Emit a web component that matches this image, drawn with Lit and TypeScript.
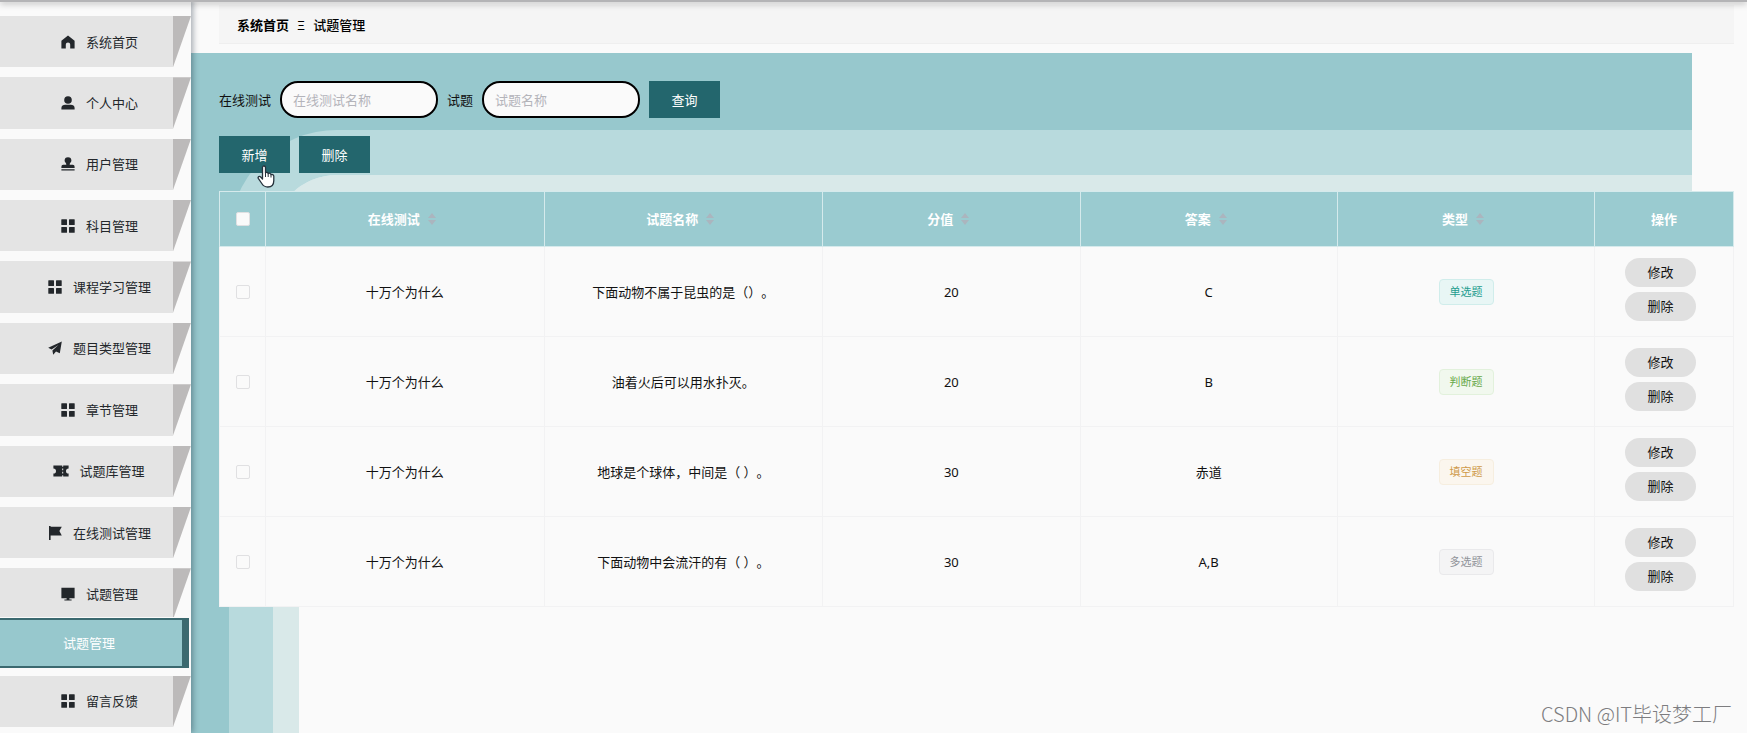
import { LitElement, html, css, svg } from "lit";
import { customElement, state } from "lit/decorators.js";
import { classMap } from "lit/directives/class-map.js";

const icons = {
  home: svg`<path d="M7 .4 13.600 5.800V13.600H9.200V9.600A2.200 2.200 0 0 0 4.800 9.600V13.600H.4V5.800Z"/>`,
  user: svg`<circle cx="7" cy="4" r="3.800"/><path d="M.4 13.600V12C.4 9.600 2.200 8.800 4.200 8.800H9.800C11.800 8.800 13.600 9.600 13.600 12V13.600Z"/>`,
  stamp: svg`<path d="M7 .2A3.400 3.400 0 0 1 10.400 3.600C10.400 5.400 8.700 5.800 8.700 7.400V7.800H11.400A2 2 0 0 1 13.600 9.800V11H.4V9.800A2 2 0 0 1 2.600 7.800H5.300V7.400C5.300 5.800 3.600 5.400 3.600 3.600A3.400 3.400 0 0 1 7 .2ZM.4 12.200H13.600V13.600H.4Z"/>`,
  grid: svg`<rect x=".3" y=".3" width="5.700" height="5.700" rx=".5"/><rect x="8" y=".3" width="5.700" height="5.700" rx=".5"/><rect x=".3" y="8" width="5.700" height="5.700" rx=".5"/><rect x="8" y="8" width="5.700" height="5.700" rx=".5"/>`,
  plane: svg`<path d="M13.800.4 11.800 12.200 8 10.600 5.200 13.800 4.400 9.600 10.400 4 3.600 8.600.2 6.800Z"/>`,
  ticket: svg`<path d="M-.6 1.400H8.200V2.800H9.200V1.400H14.600V4.400A2.600 2.600 0 0 0 14.600 9.600V12.600H9.200V11.200H8.200V12.600H-.6V9.600A2.600 2.600 0 0 0-.6 4.400ZM8.200 4.400V6.200H9.200V4.400ZM8.200 7.800V9.600H9.200V7.800Z" fill-rule="evenodd"/>`,
  flag: svg`<path d="M1 0H2.600V.8H13.800L11.400 5 13.800 9.400H2.600V14H1Z"/>`,
  monitor: svg`<path d="M.4 .8H13.600V11.200H.4ZM5.600 11.200H8.400V12.400H10.600V13.400H3.400V12.400H5.600Z"/>`,
};

type IconName = keyof typeof icons;

interface MenuEntry {
  label: string;
  icon?: IconName;
  sub?: boolean;
}

const menu: MenuEntry[] = [
  { label: "系统首页", icon: "home" },
  { label: "个人中心", icon: "user" },
  { label: "用户管理", icon: "stamp" },
  { label: "科目管理", icon: "grid" },
  { label: "课程学习管理", icon: "grid" },
  { label: "题目类型管理", icon: "plane" },
  { label: "章节管理", icon: "grid" },
  { label: "试题库管理", icon: "ticket" },
  { label: "在线测试管理", icon: "flag" },
  { label: "试题管理", icon: "monitor" },
  { label: "试题管理", sub: true },
  { label: "留言反馈", icon: "grid" },
];

@customElement("side-menu")
export class SideMenu extends LitElement {
  static styles = css`
    :host {
      display: block;
      background: #fafafa;
      box-shadow: 2px 0 6px rgba(0, 21, 41, 0.35);
    }
    .menu {
      box-sizing: border-box;
      height: 100%;
      margin: 0;
      padding: 16px 0 6px;
      list-style: none;
      display: flex;
      flex-direction: column;
    }
    .entry {
      flex: 1 1 44px;
      min-height: 44px;
      margin-bottom: 10px;
      display: flex;
    }
    .entry:last-child {
      margin-bottom: 0;
    }
    .entry.parent {
      margin-bottom: -2px;
    }
    .entry.sub {
      flex: 0 0 50px;
      margin-bottom: 8px;
      position: relative;
    }
    .link {
      flex: 1;
      display: flex;
      align-items: center;
      justify-content: center;
      gap: 11px;
      padding-left: 26px;
      background: #e4e4e4;
      color: #23272b;
      font-size: 13px;
      line-height: 20px;
      text-decoration: none;
    }
    .fold {
      flex: 0 0 18px;
      background: #bcbaba;
      clip-path: polygon(0 0, 100% 0, 0 100%);
    }
    .sub .link {
      margin-right: 2px;
      padding-left: 0;
      padding-right: 4px;
      border: solid #3b696f;
      border-width: 2px 7px 2px 0;
      background: #97c8cd;
      color: #fff;
      box-shadow: 0 -1px 0 #fafafa;
    }
    .icon {
      width: 14px;
      height: 14px;
      overflow: visible;
      fill: #23272b;
    }
  `;

  render() {
    return html`
      <ul class="menu">
        ${menu.map(
          (m, i) => html`
            <li class=${classMap({ entry: true, sub: !!m.sub, parent: !!menu[i + 1]?.sub })}>
              <a class="link" href="#">
                ${m.icon
                  ? html`<svg class="icon" viewBox="0 0 14 14" aria-hidden="true">${icons[m.icon]}</svg>`
                  : null}
                <span>${m.label}</span>
              </a>
              ${m.sub ? null : html`<span class="fold"></span>`}
            </li>
          `
        )}
      </ul>
    `;
  }
}

interface Question {
  test: string;
  name: string;
  score: number;
  answer: string;
  type: string;
  tone: string;
}

@customElement("question-table")
export class QuestionTable extends LitElement {
  static styles = css`
    :host {
      display: block;
    }
    .table {
      width: 100%;
      table-layout: fixed;
      border-collapse: collapse;
      background: #fafafa;
      color: #111;
      font-size: 13px;
      line-height: 20px;
      text-align: center;
      text-spacing-trim: space-all;
    }
    .c-pick {
      width: 46px;
    }
    .c-wide {
      width: 18.4%;
    }
    .c-mid {
      width: 17%;
    }
    .head {
      height: 54px;
      padding: 0;
      background: #9acbd0;
      border: 1px solid #d5eaec;
      color: #fff;
      font-weight: 700;
    }
    .cell {
      height: 89px;
      padding: 0;
      border: 1px solid #f2f2f3;
    }
    .title {
      display: flex;
      align-items: center;
      justify-content: center;
      gap: 8px;
      padding-right: 6px;
    }
    .sort {
      width: 8px;
      height: 12px;
      fill: #abb5be;
    }
    .check {
      appearance: none;
      display: block;
      box-sizing: border-box;
      width: 14px;
      height: 14px;
      margin: 0 auto;
      border: 1px solid #e0e0e2;
      border-radius: 2px;
      background: #fafafa;
    }
    .tag {
      display: inline-block;
      padding: 0 10px;
      border: 1px solid;
      border-radius: 4px;
      font-size: 11px;
      line-height: 24px;
      vertical-align: middle;
    }
    .teal {
      color: #1f9d8f;
      background: #e8f6f5;
      border-color: #d0edeb;
    }
    .green {
      color: #67a84a;
      background: #f1f8ee;
      border-color: #e2f1dc;
    }
    .amber {
      color: #cf9a4a;
      background: #fbf6ee;
      border-color: #f6eedf;
    }
    .grey {
      color: #909399;
      background: #f4f4f5;
      border-color: #e9e9eb;
    }
    .actions {
      display: flex;
      flex-direction: column;
      align-items: center;
    }
    .action {
      width: 71px;
      height: 29px;
      margin: 0 7px 5px 0;
      padding: 0;
      border: 0;
      border-radius: 15px;
      background: #e0e0e0;
      color: #111;
      font: inherit;
      cursor: pointer;
    }
  `;

  @state() private rows: Question[] = [
    { test: "十万个为什么", name: "下面动物不属于昆虫的是（）。", score: 20, answer: "C", type: "单选题", tone: "teal" },
    { test: "十万个为什么", name: "油着火后可以用水扑灭。", score: 20, answer: "B", type: "判断题", tone: "green" },
    { test: "十万个为什么", name: "地球是个球体，中间是（ ）。", score: 30, answer: "赤道", type: "填空题", tone: "amber" },
    { test: "十万个为什么", name: "下面动物中会流汗的有（ ）。", score: 30, answer: "A,B", type: "多选题", tone: "grey" },
  ];

  render() {
    return html`
      <table class="table">
        <colgroup>
          <col class="c-pick" />
          <col class="c-wide" />
          <col class="c-wide" />
          <col class="c-mid" />
          <col class="c-mid" />
          <col class="c-mid" />
          <col />
        </colgroup>
        <thead>
          <tr>
            <th class="head"><input class="check" type="checkbox" aria-label="全选" /></th>
            ${["在线测试", "试题名称", "分值", "答案", "类型"].map(
              (t) => html`
                <th class="head">
                  <span class="title">
                    ${t}
                    <svg class="sort" viewBox="0 0 8 12" aria-hidden="true">
                      <path d="M4 0 8 5H0ZM0 7H8L4 12Z" />
                    </svg>
                  </span>
                </th>
              `
            )}
            <th class="head">操作</th>
          </tr>
        </thead>
        <tbody>
          ${this.rows.map(
            (r) => html`
              <tr>
                <td class="cell"><input class="check" type="checkbox" aria-label=${r.name} /></td>
                <td class="cell">${r.test}</td>
                <td class="cell">${r.name}</td>
                <td class="cell">${r.score}</td>
                <td class="cell">${r.answer}</td>
                <td class="cell"><span class="tag ${r.tone}">${r.type}</span></td>
                <td class="cell">
                  <div class="actions">
                    <button class="action" type="button">修改</button>
                    <button class="action" type="button">删除</button>
                  </div>
                </td>
              </tr>
            `
          )}
        </tbody>
      </table>
    `;
  }
}

@customElement("app-root")
export class AppRoot extends LitElement {
  static styles = css`
    :host {
      display: block;
      position: relative;
      overflow: hidden;
      background: #fafafa;
      color: #111;
      font-family: "Noto Sans", "Noto Sans CJK SC", sans-serif;
      font-size: 13px;
      line-height: 20px;
    }
    .topbar {
      position: absolute;
      inset: 0 0 auto 0;
      height: 2px;
      background: #b4b4b6;
      box-shadow: 0 1px 6px rgba(0, 0, 0, 0.5);
      z-index: 3;
    }
    .layout {
      display: grid;
      grid-template-columns: 191px minmax(0, 1fr);
      min-height: 100vh;
    }
    .side {
      position: relative;
      z-index: 2;
    }
    .page {
      display: flex;
      flex-direction: column;
    }
    .crumbs {
      display: flex;
      align-items: center;
      gap: 8px;
      margin: 5px 13px 9px 28px;
      padding: 10px 18px 8px;
      border-bottom: 1px solid #efefef;
      background: #f5f5f5;
      color: #000;
    }
    .crumb {
      color: inherit;
      font-weight: 700;
      text-decoration: none;
    }
    .here {
      font-weight: 500;
    }
    .stage {
      flex: 1;
      display: grid;
    }
    .backdrop {
      grid-area: 1 / 1;
      display: flex;
      margin-right: 55px;
      padding: 77px 0 0 38px;
      background: #97c8cd;
    }
    .frame {
      flex: 1;
      border: solid #b8dadd;
      border-width: 45px 0 0 44px;
      border-top-left-radius: 108px;
      background: #fafafa;
      box-shadow: inset 26px 26px 0 #d9e9e9;
    }
    .content {
      grid-area: 1 / 1;
      padding: 28px 13px 28px 28px;
    }
    .bar {
      display: flex;
      align-items: center;
      gap: 9px;
      margin-bottom: 18px;
    }
    .box {
      box-sizing: border-box;
      width: 158px;
      height: 37px;
      padding: 0 11px;
      border: 2px solid #000;
      border-radius: 18px;
      background: #fafafa;
      color: #111;
      font: inherit;
    }
    .box::placeholder {
      color: #b4b4ba;
      opacity: 1;
    }
    .btn {
      position: relative;
      width: 71px;
      height: 37px;
      padding: 0;
      border: 0;
      background: #23666d;
      color: #fff;
      font: inherit;
      cursor: pointer;
    }
    .pointer {
      position: absolute;
      left: 38px;
      top: 29px;
      width: 18px;
      height: 23px;
      z-index: 1;
    }
    .mark {
      position: absolute;
      right: 15px;
      bottom: 5px;
      color: #7d7d80;
      font-family: "Noto Sans CJK SC", sans-serif;
      font-size: 20px;
      font-weight: 300;
      line-height: 28px;
    }
  `;

  render() {
    return html`
      <div class="topbar"></div>
      <div class="layout">
        <side-menu class="side"></side-menu>
        <div class="page">
          <nav class="crumbs">
            <a class="crumb" href="#">系统首页</a>
            <span>Ξ</span>
            <span class="here">试题管理</span>
          </nav>
          <main class="stage">
            <div class="backdrop"><div class="frame"></div></div>
            <div class="content">
              <form class="bar">
                <label for="test">在线测试</label>
                <input class="box" id="test" type="text" placeholder="在线测试名称" />
                <label for="question">试题</label>
                <input class="box" id="question" type="text" placeholder="试题名称" />
                <button class="btn" type="button">查询</button>
              </form>
              <div class="bar">
                <button class="btn" type="button">
                  新增
                  <svg class="pointer" viewBox="0 0 18 23" aria-hidden="true">
                    <path
                      d="M5.500 2.500C5.500.5 8.500.5 8.500 2.500V8C9 7 11 7.200 11.200 8.600 12 7.800 13.800 8.200 14 9.600 15 9 16.800 9.600 16.800 11.200V15.500C16.800 19.500 14.500 22 10.800 22 7.500 22 6 20.500 4.800 18.500L1.300 13.400C.5 11.800 2.500 10.800 3.700 12L5.500 14Z"
                      fill="#fff" stroke="#26323c" stroke-width="1.300" stroke-linejoin="round"
                    />
                    <path d="M8.500 8V12M11.200 8.600V12M14 9.600V12.500" stroke="#26323c" stroke-width="1" fill="none" />
                  </svg>
                </button>
                <button class="btn" type="button">删除</button>
              </div>
              <question-table></question-table>
            </div>
          </main>
        </div>
      </div>
      <div class="mark">CSDN @IT毕设梦工厂</div>
    `;
  }
}
